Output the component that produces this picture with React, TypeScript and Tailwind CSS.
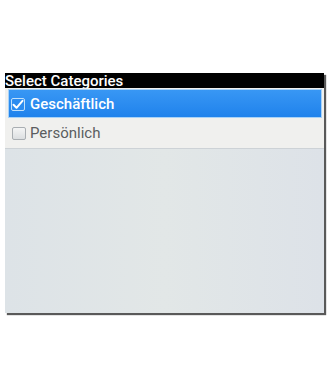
import React from "react";

export default function App() {
  return (
    <div
      className="w-[330px] h-[385px] bg-white pt-[73px] pl-[5px]"
      style={{ fontFamily: 'Roboto, "Liberation Sans", Arial, sans-serif' }}
    >
      <div className="w-[319px] h-[240px] flex flex-col bg-gradient-to-r from-[#dde3e7] via-[#e2e7e7] to-[#dde2e8] shadow-[2px_2px_1px_rgba(0,0,0,0.65)]">
        <div className="h-[15px] bg-black text-white text-[15px] font-medium leading-[16px] whitespace-nowrap">
          Select Categories
        </div>
        <div className="bg-[#f0f0ee] pt-px pb-px">
          <div className="ml-[3px] mr-[2px] h-[29px] flex items-center pl-[2px] pt-[2px] border border-[#a8d2f7] bg-gradient-to-b from-[#3897f4] to-[#1f82ec]">
            <div className="w-[14px] h-[13px] rounded-[2px] border border-[#bfe0fb] bg-[#2c8cf0] flex items-center justify-center">
              <svg width="12" height="11" viewBox="0 0 12 11">
                <path d="M1.5 5.8 L4.5 8.8 L10.5 1.8" fill="none" stroke="white" strokeWidth="2" strokeLinecap="round" strokeLinejoin="round" />
              </svg>
            </div>
            <span className="ml-[5px] text-white text-[15px] font-medium leading-[15px]">Geschäftlich</span>
          </div>
          <div className="h-[29px] flex items-center pl-[7px] pt-[1px]">
            <div className="w-[14px] h-[13px] rounded-[2px] border border-[#a9aeb2] bg-gradient-to-b from-[#f4f5f5] to-[#dcdfe1]" />
            <span className="ml-[4px] text-[#5a5d60] text-[15px] leading-[15px]">Persönlich</span>
          </div>
        </div>
        <div className="flex-1 border-t border-[#cdd2d6]" />
      </div>
    </div>
  );
}
